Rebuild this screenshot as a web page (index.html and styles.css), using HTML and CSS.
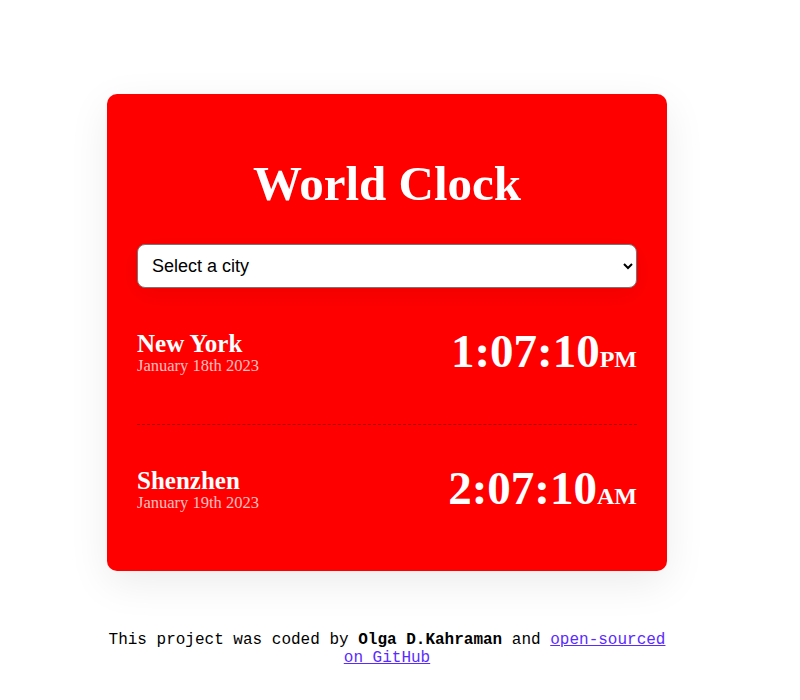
FILE: index.html
```html
<!DOCTYPE html>
<html lang="en">
<head>
<meta charset="utf-8">
<title>World Clock</title>
<link rel="stylesheet" href="styles.css">
</head>
<body>
<div class="page">
  <main class="card">
    <h1 class="title">World Clock</h1>
    <select class="city-select">
      <option>Select a city</option>
      <option>Los Angeles</option>
      <option>Paris</option>
      <option>Tokyo</option>
    </select>
    <div class="cities">
      <div class="city">
        <div class="city-info">
          <h2 class="city-name">New York</h2>
          <div class="city-date">January 18th 2023</div>
        </div>
        <div class="city-time">1:07:10<small class="ampm">PM</small></div>
      </div>
      <div class="city">
        <div class="city-info">
          <h2 class="city-name">Shenzhen</h2>
          <div class="city-date">January 19th 2023</div>
        </div>
        <div class="city-time">2:07:10<small class="ampm">AM</small></div>
      </div>
    </div>
  </main>
  <footer class="footer">
    This project was coded by <strong>Olga D.Kahraman</strong> and <a href="#">open-sourced on GitHub</a>
  </footer>
</div>
</body>
</html>
```

FILE: styles.css
```css
html, body {
  margin: 0;
  padding: 0;
  background: #ffffff;
}

body {
  padding-right: 26px;
}

.page {
  width: 560px;
  margin: 94px auto 0;
}

.card {
  background: #ff0000;
  border-radius: 10px;
  padding: 30px 30px 10px;
  box-shadow: 0 12px 40px rgba(0, 0, 0, 0.08);
  font-family: "Liberation Serif", "Times New Roman", serif;
  color: #ffffff;
}

.title {
  margin: 32px 0 33px;
  font-size: 49px;
  font-weight: bold;
  text-align: center;
  line-height: 55px;
}

.city-select {
  display: block;
  width: 500px;
  height: 44px;
  margin: 0;
  padding: 0 8px 0 10px;
  font-family: "Liberation Sans", Arial, sans-serif;
  font-size: 18px;
  color: #000000;
  background-color: #ffffff;
  border: 1px solid #767676;
  border-radius: 8px;
  box-shadow: 0 6px 24px rgba(0, 0, 0, 0.07);
}

.city {
  display: flex;
  justify-content: space-between;
  align-items: center;
  padding: 36px 0 45px;
  border-bottom: 1px dashed rgba(0, 0, 0, 0.35);
}

.city:last-child {
  border-bottom: 0;
}

.city-info {
  margin-top: 2px;
}

.city-name {
  margin: 0;
  font-size: 25px;
  font-weight: bold;
  line-height: 26px;
}

.city-date {
  font-size: 16.5px;
  line-height: 17px;
  color: rgba(255, 255, 255, 0.75);
}

.city-time {
  font-size: 47px;
  font-weight: bold;
  line-height: 55px;
}

.ampm {
  font-size: 24px;
  font-weight: bold;
  line-height: 1;
}

.footer {
  margin-top: 60px;
  font-family: "Liberation Mono", "Courier New", monospace;
  font-size: 16px;
  line-height: 18px;
  text-align: center;
  color: #000000;
}

.footer a {
  color: #5a2bff;
}
```
